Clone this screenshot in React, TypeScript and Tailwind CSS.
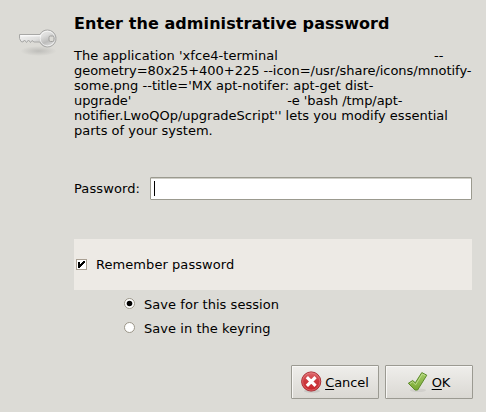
import React from "react";

function KeyIcon() {
  return (
    <svg width="48" height="38" viewBox="0 0 48 38" className="block">
      <defs>
        <linearGradient id="metal" x1="0" y1="0" x2="1" y2="1">
          <stop offset="0" stopColor="#fafafa" />
          <stop offset=".5" stopColor="#dededd" />
          <stop offset=".72" stopColor="#bcbcbb" />
          <stop offset="1" stopColor="#f0f0f0" />
        </linearGradient>
        <radialGradient id="keyShadow">
          <stop offset="0" stopColor="#777" stopOpacity=".3" />
          <stop offset="1" stopColor="#777" stopOpacity="0" />
        </radialGradient>
      </defs>
      <ellipse cx="23.500" cy="30" rx="18" ry="5" fill="url(#keyShadow)" />
      <path
        d="M4.500 13.500H25C26.500 10.500 29 9 32.500 9A8.500 8.500 0 1 1 24.800 21H19L17 19.500L15.500 21.500L13.500 19L11.500 21.500L9.500 19L8 21L6 20.500L4.500 17.500Z"
        fill="url(#metal)"
        stroke="#a8a8a6"
      />
      <path d="M5.500 14.800H26" stroke="#fff" strokeWidth="1" />
      <circle cx="32.500" cy="17.500" r="7.300" fill="none" stroke="#fff" strokeOpacity=".6" />
      <rect x="34" y="15" width="5" height="5.500" rx="1.500" fill="#dcdbd6" stroke="#a0a09e" />
    </svg>
  );
}

function CancelIcon() {
  return (
    <svg width="22" height="22" viewBox="0 0 22 22" className="block shrink-0">
      <defs>
        <linearGradient id="red" x1="0" y1="0" x2="0" y2="1">
          <stop offset="0" stopColor="#df6c70" />
          <stop offset=".45" stopColor="#cc3a40" />
          <stop offset="1" stopColor="#c9252b" />
        </linearGradient>
      </defs>
      <ellipse cx="12" cy="20" rx="8" ry="1.800" fill="#777" opacity=".2" />
      <circle cx="11.200" cy="10.500" r="9.600" fill="url(#red)" stroke="#a92d34" />
      <circle cx="11.200" cy="10.500" r="8.600" fill="none" stroke="#ee8c8e" strokeOpacity=".5" />
      <path d="M8 7.300L14.400 13.700M14.400 7.300L8 13.700" stroke="#fff" strokeWidth="3.200" strokeLinecap="square" />
    </svg>
  );
}

function OkIcon() {
  return (
    <svg width="22" height="22" viewBox="0 0 22 22" className="block shrink-0">
      <defs>
        <linearGradient id="green" x1="0" y1="0" x2="0" y2="1">
          <stop offset="0" stopColor="#a5cc68" />
          <stop offset="1" stopColor="#78a832" />
        </linearGradient>
      </defs>
      <ellipse cx="11" cy="19.300" rx="8" ry="1.800" fill="#777" opacity=".13" />
      <path
        d="M1.300 12.300L5.700 9.500L8.300 11.800L14.800 1.600L19.800 4.200L10.600 19H8Z"
        fill="url(#green)"
        stroke="#5c8a2b"
        strokeLinejoin="round"
      />
      <path d="M3 12.500L5.600 10.900L8.600 13.800L15.300 3L18.300 4.600" fill="none" stroke="#c6e29b" strokeWidth=".8" />
    </svg>
  );
}

function Radio({ label, checked }: { label: string; checked?: boolean }) {
  return (
    <div className="flex h-6 items-center gap-[9px]">
      <svg width="11" height="11" viewBox="0 0 11 11" className="mb-px block">
        <circle cx="5.500" cy="5.500" r="5" fill="#fff" stroke="#9b9689" />
        {checked && <circle cx="5.500" cy="5.500" r="2.800" fill="#000" />}
      </svg>
      <span className="tracking-[0.05px]">{label}</span>
    </div>
  );
}

function Button({ icon, mnemonic, rest }: { icon: React.ReactNode; mnemonic: string; rest: string }) {
  return (
    <button className="flex h-[34px] w-[88px] items-center justify-center rounded-[1px] border border-[#9b9a92] bg-linear-to-b from-[#efeeeb] to-[#dad8d3] pr-px shadow-[inset_1px_1px_0_#f8f7f5]">
      {icon}
      <span className="ml-[3px] tracking-[-0.05px]">
        <span className="underline decoration-1 underline-offset-2">{mnemonic}</span>
        {rest}
      </span>
    </button>
  );
}

export default function App() {
  return (
    <main className="flex h-[412px] w-[486px] bg-[#dcdbd6] font-['DejaVu_Sans',sans-serif] text-[13px] leading-[15px] text-black">
      <div className="w-[74px] shrink-0 pt-[21px] pl-[15px]">
        <KeyIcon />
      </div>
      <div className="w-[398px]">
        <h1 className="pt-[14px] text-[16px] leading-[19px] font-bold tracking-[0.07px] whitespace-nowrap">
          Enter the administrative password
        </h1>
        <div className="mt-[15px] whitespace-nowrap">
          <p className="flex gap-[156px] tracking-[0.05px]">
            <span>The application 'xfce4-terminal</span>
            <span>--</span>
          </p>
          <p className="tracking-[-0.03px]">geometry=80x25+400+225 --icon=/usr/share/icons/mnotify-</p>
          <p className="tracking-[0.01px]">some.png --title='MX apt-notifer: apt-get dist-</p>
          <p className="flex gap-[156px] tracking-[-0.08px]">
            <span>upgrade'</span>
            <span>-e 'bash /tmp/apt-</span>
          </p>
          <p>notifier.LwoQOp/upgradeScript'' lets you modify essential</p>
          <p>parts of your system.</p>
        </div>
        <div className="mt-[39px] flex items-center">
          <label className="w-[76px] tracking-[0.1px]">Password:</label>
          <div className="flex h-[23px] flex-1 items-center rounded-[1px] border border-[#9b9a8f] bg-white pl-[3px] shadow-[inset_0_1px_0_#d0cfc8]">
            <div className="h-[15px] w-px bg-black" />
          </div>
        </div>
        <div className="mt-[39px] flex h-[51px] items-center bg-[#edeae5] pl-[2px]">
          <svg width="11" height="11" viewBox="0 0 11 11" className="mb-px block">
            <rect x=".5" y=".5" width="10" height="10" fill="#fff" stroke="#a99f92" />
            <path d="M2 3H4V5H5V4H6V3H7V2H9V4H8V5H7V6H6V7H5V8H4V9H2Z" fill="#000" />
          </svg>
          <span className="ml-[9px] tracking-[0.06px]">Remember password</span>
        </div>
        <div className="mt-[2px] pl-[50px]">
          <Radio label="Save for this session" checked />
          <Radio label="Save in the keyring" />
        </div>
        <div className="mt-[25px] -mr-px flex justify-end gap-[6px]">
          <Button icon={<CancelIcon />} mnemonic="C" rest="ancel" />
          <Button icon={<OkIcon />} mnemonic="O" rest="K" />
        </div>
      </div>
    </main>
  );
}
